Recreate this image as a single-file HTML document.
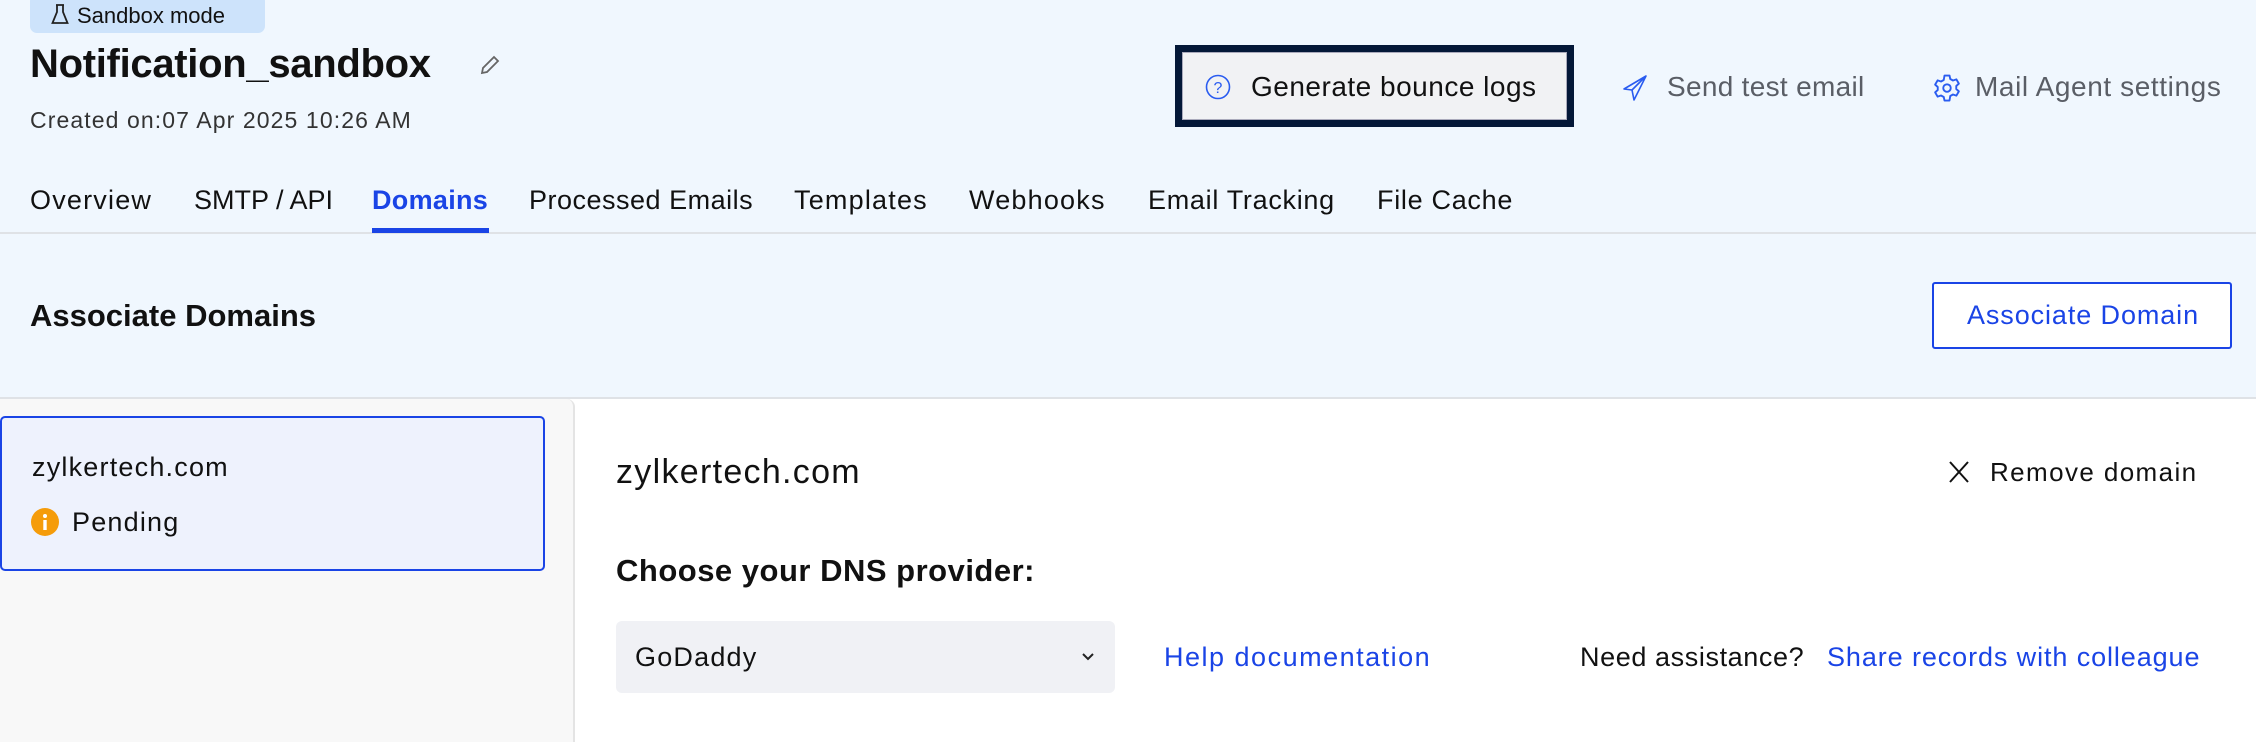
<!DOCTYPE html>
<html><head><meta charset="utf-8"><style>
*{margin:0;padding:0;box-sizing:border-box}
body{width:2256px;height:742px;overflow:hidden;background:#fff;font-family:"Liberation Sans",sans-serif;position:relative;color:#111}
.a{position:absolute;white-space:nowrap;line-height:1}
</style></head><body>
<div class="a" style="left:0;top:0;width:2256px;height:399px;background:#f0f7fe"></div>
<div class="a" style="left:0;top:232px;width:2256px;height:2px;background:#dfe2e6"></div>
<div class="a" style="left:0;top:397px;width:2256px;height:2px;background:#dfe2e6"></div>

<div class="a" style="left:30px;top:-6px;width:235px;height:39px;background:#cde3fb;border-radius:7px"></div>
<svg class="a" style="left:51px;top:4px" width="18" height="21" viewBox="0 0 18 21"><path d="M5 1h8M6 1v7L1.5 19h15L12 8V1" fill="none" stroke="#222" stroke-width="1.8"/></svg>
<div class="a" style="left:77px;top:5px;font-size:22px;color:#111">Sandbox mode</div>

<div class="a" style="left:30px;top:44px;font-size:40px;font-weight:bold;letter-spacing:-0.3px">Notification_sandbox</div>
<svg class="a" style="left:478px;top:53px" width="24" height="24" viewBox="0 0 24 24"><path d="M4 20l1-5L16 4l4 4L9 19z" fill="none" stroke="#666" stroke-width="1.8"/></svg>
<div class="a" style="left:30px;top:109px;font-size:23px;color:#333;letter-spacing:1.1px">Created on:07 Apr 2025 10:26 AM</div>

<div class="a" style="left:1175px;top:45px;width:399px;height:82px;background:#041838"></div>
<div class="a" style="left:1182px;top:52px;width:385px;height:68px;background:#f1f2f4;border:1px solid #aab"></div>
<svg class="a" style="left:1205px;top:74px" width="26" height="26" viewBox="0 0 26 26"><circle cx="13" cy="13" r="11.5" fill="none" stroke="#2a5cf0" stroke-width="1.6"/><text x="13" y="19" text-anchor="middle" font-size="16" fill="#2a5cf0" font-family="Liberation Sans">?</text></svg>
<div class="a" style="left:1251px;top:73px;font-size:28px;color:#111;letter-spacing:0.5px">Generate bounce logs</div>

<svg class="a" style="left:1622px;top:74px" width="26" height="28" viewBox="0 0 26 28"><path d="M24 2L2 15l8 1 2 10zM10 16L24 2" fill="none" stroke="#2a5cf0" stroke-width="1.6" stroke-linejoin="round"/></svg>
<div class="a" style="left:1667px;top:73px;font-size:28px;color:#5a5e66;letter-spacing:0.3px">Send test email</div>
<svg class="a" style="left:1932px;top:73px" width="30" height="30" viewBox="0 0 24 24"><path d="M10 2h4l.6 2.8 2.2 1.2 2.7-.9 2 3.4-2.1 1.9v2.4l2.1 1.9-2 3.4-2.7-.9-2.2 1.2L14 22h-4l-.6-2.8-2.2-1.2-2.7.9-2-3.4 2.1-1.9v-2.4L2.5 9.3l2-3.4 2.7.9 2.2-1.2z" fill="none" stroke="#2a5cf0" stroke-width="1.5" stroke-linejoin="round"/><circle cx="12" cy="12" r="3" fill="none" stroke="#2a5cf0" stroke-width="1.5"/></svg>
<div class="a" style="left:1975px;top:73px;font-size:28px;color:#5a5e66;letter-spacing:0.6px">Mail Agent settings</div>

<div class="a" style="left:30px;top:187px;font-size:27px;letter-spacing:1.2px">Overview</div>
<div class="a" style="left:194px;top:187px;font-size:27px">SMTP / API</div>
<div class="a" style="left:372px;top:187px;font-size:27px;color:#1a44e6;font-weight:bold;letter-spacing:0.3px">Domains</div>
<div class="a" style="left:372px;top:228px;width:117px;height:5px;background:#1a44e6"></div>
<div class="a" style="left:529px;top:187px;font-size:27px;letter-spacing:0.5px">Processed Emails</div>
<div class="a" style="left:794px;top:187px;font-size:27px;letter-spacing:1.2px">Templates</div>
<div class="a" style="left:969px;top:187px;font-size:27px;letter-spacing:1.2px">Webhooks</div>
<div class="a" style="left:1148px;top:187px;font-size:27px;letter-spacing:0.7px">Email Tracking</div>
<div class="a" style="left:1377px;top:187px;font-size:27px;letter-spacing:0.7px">File Cache</div>

<div class="a" style="left:30px;top:300px;font-size:31px;font-weight:bold;letter-spacing:0px">Associate Domains</div>
<div class="a" style="left:1932px;top:282px;width:300px;height:67px;border:2px solid #1a44e6;border-radius:3px;background:#fff"></div>
<div class="a" style="left:1967px;top:302px;font-size:27px;color:#1a44e6;letter-spacing:0.9px">Associate Domain</div>

<div class="a" style="left:0;top:399px;width:575px;height:343px;background:#f8f8f8;border-right:2px solid #e4e4e4;border-top-right-radius:8px"></div>
<div class="a" style="left:0;top:416px;width:545px;height:155px;background:#eef2fd;border:2px solid #1a44e6;border-radius:5px"></div>
<div class="a" style="left:32px;top:454px;font-size:27px;letter-spacing:1.2px">zylkertech.com</div>
<svg class="a" style="left:31px;top:508px" width="28" height="28" viewBox="0 0 28 28"><circle cx="14" cy="14" r="14" fill="#f59c0a"/><rect x="12.3" y="12" width="3.4" height="10" fill="#fff"/><circle cx="14" cy="8" r="2" fill="#fff"/></svg>
<div class="a" style="left:72px;top:509px;font-size:27px;letter-spacing:1.2px">Pending</div>

<div class="a" style="left:616px;top:455px;font-size:34px;letter-spacing:1.3px">zylkertech.com</div>
<svg class="a" style="left:1948px;top:460px" width="22" height="24" viewBox="0 0 22 24"><path d="M2 2l18 20M20 2L2 22" stroke="#111" stroke-width="2"/></svg>
<div class="a" style="left:1990px;top:459px;font-size:26px;letter-spacing:1.4px">Remove domain</div>

<div class="a" style="left:616px;top:555px;font-size:31px;font-weight:bold;letter-spacing:0.5px">Choose your DNS provider:</div>
<div class="a" style="left:616px;top:621px;width:499px;height:72px;background:#f0f1f5;border-radius:6px"></div>
<div class="a" style="left:635px;top:644px;font-size:27px;letter-spacing:1.2px">GoDaddy</div>
<svg class="a" style="left:1081px;top:652px" width="14" height="10" viewBox="0 0 14 10"><path d="M2 2l5 5 5-5" fill="none" stroke="#222" stroke-width="2"/></svg>
<div class="a" style="left:1164px;top:644px;font-size:27px;color:#1a44e6;letter-spacing:1.5px">Help documentation</div>
<div class="a" style="left:1580px;top:644px;font-size:27px;letter-spacing:0.6px">Need assistance?</div>
<div class="a" style="left:1827px;top:644px;font-size:27px;color:#1a44e6;letter-spacing:0.9px">Share records with colleague</div>
</body></html>
